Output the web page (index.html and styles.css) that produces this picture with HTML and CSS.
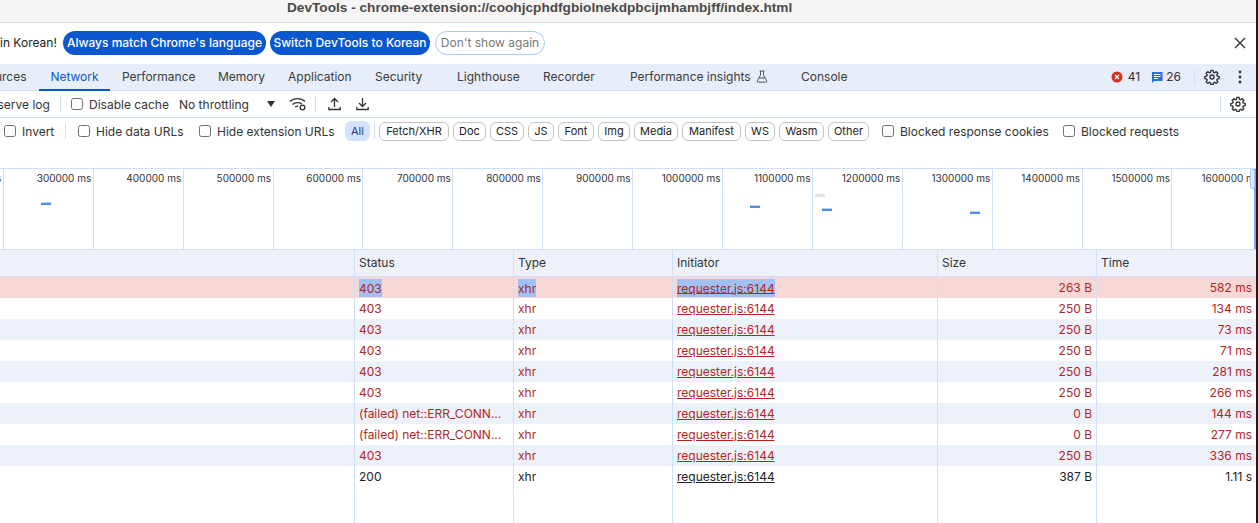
FILE: index.html
```html
<!DOCTYPE html>
<html lang="en">
<head>
<meta charset="utf-8">
<title>DevTools</title>
<link rel="stylesheet" href="styles.css">
</head>
<body>
<div class="app">
  <header class="titlebar">DevTools - chrome-extension://coohjcphdfgbiolnekdpbcijmhambjff/index.html</header>
  <div class="infobar">
    <span class="info-text">in Korean!</span>
    <button class="pill pill-primary pill-a">Always match Chrome's language</button>
    <button class="pill pill-primary pill-b">Switch DevTools to Korean</button>
    <button class="pill pill-ghost">Don't show again</button>
    <svg class="close" width="12" height="12" viewBox="0 0 12 12"><path d="M1 1l10 10M11 1L1 11" stroke="#333" stroke-width="1.4" fill="none"/></svg>
  </div>
  <nav class="tabs">
    <span class="tab tab-clip">Sources</span>
    <span class="tab tab-active">Network</span>
    <span class="tab t-perf">Performance</span>
    <span class="tab t-mem">Memory</span>
    <span class="tab t-app">Application</span>
    <span class="tab t-sec">Security</span>
    <span class="tab t-light">Lighthouse</span>
    <span class="tab t-rec">Recorder</span>
    <span class="tab t-ins">Performance insights
      <svg class="flask" width="12" height="13" viewBox="0 0 12 13"><path d="M3.5 1h5M4.5 1v4L1.2 11.2c-.2.5.1.9.6.9h8.400c.5 0 .8-.4.6-.9L7.500 5V1M3 8h6" stroke="#555" stroke-width="1" fill="none"/></svg>
    </span>
    <span class="tab t-con">Console</span>
    <span class="tab-right">
      <svg class="err-icon" width="12" height="12" viewBox="0 0 12 12"><circle cx="6" cy="6" r="5.500" fill="#d93025"/><path d="M4 4l4 4M8 4l-4 4" stroke="#fff" stroke-width="1.200"/></svg>
      <span class="count c-err">41</span>
      <svg class="msg" width="12" height="12" viewBox="0 0 12 12"><path d="M1 1h10.500v9H3l-2 2z" fill="#1a73e8"/><path d="M3 3.500h6.500M3 5.500h6.500M3 7.500h4" stroke="#fff" stroke-width="1"/></svg>
      <span class="count c-msg">26</span>
      <i class="vsep vsep-tab"></i>
      <svg class="gear g-tab" width="16" height="16" viewBox="0 0 24 24"><path d="M10.300 2h3.400l.5 2.900 1.800.8 2.400-1.700 2.400 2.400-1.700 2.400.8 1.800 2.900.5v3.400l-2.900.5-.8 1.800 1.700 2.400-2.400 2.400-2.400-1.700-1.800.8-.5 2.900h-3.400l-.5-2.900-1.800-.8-2.400 1.700-2.400-2.400 1.700-2.400-.8-1.800-2.900-.5v-3.400l2.900-.5.8-1.800-1.700-2.400 2.400-2.400 2.400 1.700 1.800-.8z" fill="none" stroke="#333" stroke-width="2" stroke-linejoin="round"/><circle cx="12" cy="12" r="3" fill="none" stroke="#333" stroke-width="2"/></svg>
      <svg class="dots" width="4" height="14" viewBox="0 0 4 14"><circle cx="2" cy="2" r="1.400" fill="#333"/><circle cx="2" cy="7" r="1.400" fill="#333"/><circle cx="2" cy="12" r="1.400" fill="#333"/></svg>
    </span>
  </nav>
  <div class="toolbar">
    <span class="tool-clip">Preserve log</span>
    <i class="vsep"></i>
    <label class="check c-cache"><i class="box"></i>Disable cache</label>
    <span class="throttle">No throttling</span>
    <i class="caret"></i>
    <svg class="wifi" width="18" height="14" viewBox="0 0 18 14"><path d="M1 4.500C5 .7 12 .7 16 4.500M3.500 7.500c2.500-2.300 7-2.300 9.500-.5M6.200 10c1-.8 2.200-1 3-.8" stroke="#333" stroke-width="1.200" fill="none"/><circle cx="13.500" cy="10.500" r="2.300" fill="none" stroke="#333" stroke-width="1.300"/></svg>
    <i class="vsep vs-2"></i>
    <svg class="io io-up" width="13" height="14" viewBox="0 0 13 14"><path d="M6.500 10V2M3 5l3.500-3.500L10 5M.8 10v2.500h11.400V10" stroke="#333" stroke-width="1.300" fill="none"/></svg>
    <svg class="io io-down" width="13" height="14" viewBox="0 0 13 14"><path d="M6.500 1v8.500M3 6l3.500 3.500L10 6M.8 10v2.500h11.400V10" stroke="#333" stroke-width="1.300" fill="none"/></svg>
    <span class="tool-right">
      <i class="vsep"></i>
      <svg class="gear g-tool" width="16" height="16" viewBox="0 0 24 24"><path d="M10.300 2h3.400l.5 2.900 1.800.8 2.400-1.700 2.400 2.400-1.700 2.400.8 1.800 2.900.5v3.400l-2.900.5-.8 1.800 1.700 2.400-2.400 2.400-2.400-1.700-1.800.8-.5 2.900h-3.400l-.5-2.900-1.800-.8-2.400 1.700-2.400-2.400 1.700-2.400-.8-1.800-2.900-.5v-3.400l2.900-.5.8-1.800-1.700-2.400 2.400-2.400 2.400 1.700 1.800-.8z" fill="none" stroke="#333" stroke-width="2" stroke-linejoin="round"/><circle cx="12" cy="12" r="3" fill="none" stroke="#333" stroke-width="2"/></svg>
    </span>
  </div>
  <div class="filters">
    <label class="check c-inv"><i class="box"></i>Invert</label>
    <i class="vsep vs-3"></i>
    <label class="check c-data"><i class="box"></i>Hide data URLs</label>
    <label class="check c-ext"><i class="box"></i>Hide extension URLs</label>
    <span class="chip chip-all">All</span>
    <i class="vsep vs-4"></i>
    <div class="chips">
      <span class="chip">Fetch/XHR</span>
      <span class="chip">Doc</span>
      <span class="chip">CSS</span>
      <span class="chip">JS</span>
      <span class="chip">Font</span>
      <span class="chip">Img</span>
      <span class="chip">Media</span>
      <span class="chip">Manifest</span>
      <span class="chip">WS</span>
      <span class="chip">Wasm</span>
      <span class="chip">Other</span>
    </div>
    <label class="check c-cook"><i class="box"></i>Blocked response cookies</label>
    <label class="check c-req"><i class="box"></i>Blocked requests</label>
  </div>
  <section class="overview">
    <div class="ov-cell ov-first"><span class="ov-label">200000 ms</span></div>
    <div class="ov-cell"><span class="ov-label">300000 ms</span><i class="bar b-300"></i></div>
    <div class="ov-cell"><span class="ov-label">400000 ms</span></div>
    <div class="ov-cell"><span class="ov-label">500000 ms</span></div>
    <div class="ov-cell"><span class="ov-label">600000 ms</span></div>
    <div class="ov-cell"><span class="ov-label">700000 ms</span></div>
    <div class="ov-cell"><span class="ov-label">800000 ms</span></div>
    <div class="ov-cell"><span class="ov-label">900000 ms</span></div>
    <div class="ov-cell"><span class="ov-label">1000000 ms</span></div>
    <div class="ov-cell"><span class="ov-label">1100000 ms</span><i class="bar b-1100"></i></div>
    <div class="ov-cell"><span class="ov-label">1200000 ms</span><i class="bar bar-grey"></i><i class="bar b-1200"></i></div>
    <div class="ov-cell"><span class="ov-label">1300000 ms</span><i class="bar b-1300"></i></div>
    <div class="ov-cell"><span class="ov-label">1400000 ms</span></div>
    <div class="ov-cell"><span class="ov-label">1500000 ms</span></div>
    <div class="ov-cell ov-last"><span class="ov-label">1600000 ms</span></div>
    <i class="handle"></i>
    <i class="grip"></i>
  </section>
  <section class="table">
    <div class="row row-head"><span></span><span>Status</span><span>Type</span><span>Initiator</span><span>Size</span><span>Time</span></div>
    <div class="row err row-sel"><span></span><span><mark>403</mark></span><span><mark>xhr</mark></span><span><mark class="link">requester.js:6144</mark></span><span class="num">263 B</span><span class="num">582 ms</span></div>
    <div class="row err"><span></span><span>403</span><span>xhr</span><span class="link">requester.js:6144</span><span class="num">250 B</span><span class="num">134 ms</span></div>
    <div class="row err alt"><span></span><span>403</span><span>xhr</span><span class="link">requester.js:6144</span><span class="num">250 B</span><span class="num">73 ms</span></div>
    <div class="row err"><span></span><span>403</span><span>xhr</span><span class="link">requester.js:6144</span><span class="num">250 B</span><span class="num">71 ms</span></div>
    <div class="row err alt"><span></span><span>403</span><span>xhr</span><span class="link">requester.js:6144</span><span class="num">250 B</span><span class="num">281 ms</span></div>
    <div class="row err"><span></span><span>403</span><span>xhr</span><span class="link">requester.js:6144</span><span class="num">250 B</span><span class="num">266 ms</span></div>
    <div class="row err alt"><span></span><span>(failed) net::ERR_CONN...</span><span>xhr</span><span class="link">requester.js:6144</span><span class="num">0 B</span><span class="num">144 ms</span></div>
    <div class="row err"><span></span><span>(failed) net::ERR_CONN...</span><span>xhr</span><span class="link">requester.js:6144</span><span class="num">0 B</span><span class="num">277 ms</span></div>
    <div class="row err alt"><span></span><span>403</span><span>xhr</span><span class="link">requester.js:6144</span><span class="num">250 B</span><span class="num">336 ms</span></div>
    <div class="row"><span></span><span>200</span><span>xhr</span><span class="link">requester.js:6144</span><span class="num">387 B</span><span class="num">1.11 s</span></div>
    <div class="row row-fill"><span></span><span></span><span></span><span></span><span></span><span></span></div>
  </section>
</div>
</body>
</html>
```
FILE: styles.css
```css
* { box-sizing: border-box; }
html, body { margin: 0; padding: 0; height: 100%; overflow: hidden; background: #fff; }
body { font-family: Inter, "Liberation Sans", sans-serif; font-size: 12px; color: #333; }
.app { width: 1258px; height: 523px; display: flex; flex-direction: column; overflow: hidden; border-right: 2px solid #1c1c1e; }
i { display: block; }

.titlebar { height: 23px; flex: none; background: #f6f5f3; border-bottom: 1px solid #d4d4d4; font-family: "Liberation Sans", sans-serif; font-weight: 700; font-size: 13.65px; line-height: 15px; color: #4a4a4a; padding-left: 287px; white-space: nowrap; }

.infobar { height: 41px; flex: none; display: flex; align-items: center; white-space: nowrap; padding-bottom: 2px; }
.info-text { width: 63px; flex: none; color: #222; }
.pill { height: 24px; border-radius: 12px; border: 0; padding: 0; font: 500 12px Inter, sans-serif; flex: none; }
.pill-primary { background: #0b57d0; color: #fff; }
.pill-a { width: 203px; margin-right: 4px; }
.pill-b { width: 160px; margin-right: 5px; }
.pill-ghost { width: 110px; background: #fff; color: #777; border: 1px solid #a8c7fa; font-weight: 400; }
.close { margin-left: auto; margin-right: 10px; }

.tabs { height: 27px; flex: none; background: #e7eef9; border-bottom: 1px solid #d0dff5; display: flex; align-items: stretch; white-space: nowrap; color: #3c3c3c; }
.tab { display: flex; align-items: center; flex: none; padding-bottom: 2px; }
.tab-clip { margin-left: -20px; width: 59px; }
.tab-active { width: 71px; justify-content: center; color: #0b57d0; border-bottom: 2px solid #0b57d0; margin-bottom: -1px; padding-bottom: 1px; }
.t-perf { margin-left: 12px; width: 96px; }
.t-mem { width: 70px; }
.t-app { width: 87px; }
.t-sec { width: 82px; }
.t-light { width: 86px; }
.t-rec { width: 87px; }
.t-ins { width: 171px; }
.flask { margin-left: 5px; }
.t-con { width: 60px; }
.tab-right { margin-left: auto; display: flex; align-items: center; padding-bottom: 1px; }
.count { color: #333; }
.c-err { margin-left: 5px; margin-right: 11px; }
.c-msg { margin-left: 3px; }
.vsep { width: 1px; height: 16px; background: #d0dff5; flex: none; }
.vsep-tab { margin-left: 13px; }
.g-tab { margin-left: 9px; }
.dots { margin-left: 18px; margin-right: 14px; }

.toolbar { height: 27px; flex: none; border-bottom: 1px solid #d0dff5; display: flex; align-items: center; white-space: nowrap; color: #333; }
.tool-clip { margin-left: -21.5px; width: 81.5px; flex: none; }
.check { display: flex; align-items: center; flex: none; color: #333; }
.box { width: 12px; height: 12px; border: 1px solid #6f6f6f; border-radius: 2.5px; background: #fff; margin-right: 6px; flex: none; }
.c-cache { margin-left: 10px; width: 108px; }
.throttle { width: 88px; flex: none; }
.caret { width: 0; height: 0; border-left: 4.5px solid transparent; border-right: 4.5px solid transparent; border-top: 6px solid #333; flex: none; }
.wifi { margin-left: 14px; flex: none; }
.vs-2 { margin-left: 8px; }
.io { flex: none; }
.io-up { margin-left: 12px; }
.io-down { margin-left: 15px; }
.tool-right { margin-left: auto; display: flex; align-items: center; }
.g-tool { margin-left: 9px; margin-right: 10px; }

.filters { height: 50px; flex: none; padding-bottom: 24px; display: flex; align-items: center; white-space: nowrap; }
.c-inv { margin-left: 4px; width: 55px; }
.vs-3 { margin-left: 6px; }
.c-data { margin-left: 12px; width: 121px; }
.c-ext { width: 146px; }
.chips { display: grid; grid-template-columns: 70px 33px 34px 26px 36px 32px 44px 59px 30px 45px 41px; column-gap: 4px; flex: none; }
.chip { height: 19px; border: 1px solid #c4c4c4; border-radius: 6px; font-size: 11px; line-height: 17px; text-align: center; color: #222; flex: none; }
.chip-all { width: 25px; background: #d3e3fd; border-color: #d3e3fd; color: #1f3b6e; height: 20px; line-height: 18px; margin-right: 4px; }
.vs-4 { margin-right: 4px; }
.c-cook { margin-left: 13px; width: 181px; }

.overview { height: 82px; flex: none; border-top: 1px solid #d0dff5; border-bottom: 1px solid #d0dff5; display: flex; overflow: hidden; position: relative; }
.ov-cell { flex: none; width: 89.9px; position: relative; border-right: 1px solid #d0dff5; }
.ov-first { margin-left: -86px; }
.ov-last { border-right: 0; width: 200px; }
.ov-label { position: absolute; right: 1.5px; top: 3px; font-size: 10px; line-height: 12px; color: #333; white-space: nowrap; }
.ov-last .ov-label { right: auto; left: 29px; }
.bar { position: absolute; width: 10px; height: 3px; background: #4f8cf0; border-top: 1px solid #b9d0f7; }
.bar-grey { left: 2px; top: 25px; height: 3px; border: 0; background: #e4e4e4; }
.b-300 { left: 37px; top: 33px; }
.b-1100 { left: 27px; top: 36px; }
.b-1200 { left: 9px; top: 39px; }
.b-1300 { left: 67px; top: 42px; }
.handle { position: absolute; right: 0; top: 0; width: 2px; height: 80px; background: #7aa5ea; }
.grip { position: absolute; right: 1px; top: 0; width: 5px; height: 20px; background: #e3ecfb; border: 1px solid #a8c7fa; border-radius: 2px; }

.table { flex: 1; display: flex; flex-direction: column; }
.row { display: grid; grid-template-columns: 355px 159px 159px 265px 159px 159px; height: 21px; line-height: 21px; flex: none; white-space: nowrap; color: #222; }
.row > span { border-right: 1px solid #cfdff6; padding: 0 4px; overflow: hidden; }
.row > span:last-child { border-right: 0; }
.row-head { height: 27px; line-height: 26px; background: #eef1f9; border-bottom: 1px solid #d0dff5; color: #333; }
.alt { background: #edf1fa; }
.err { color: #b3261e; }
.row-sel { background: #f8d7d7; }
.num { text-align: right; }
.link { text-decoration: underline; }
mark { background: #a1c0f3; color: #b3261e; padding: 1.5px 0; }
.row-fill { flex: 1; height: auto; }
```
